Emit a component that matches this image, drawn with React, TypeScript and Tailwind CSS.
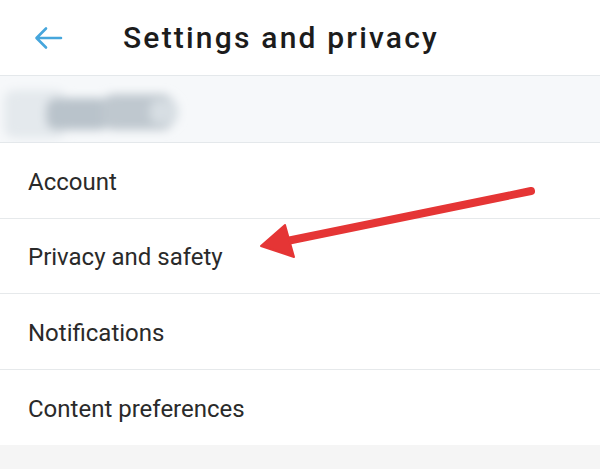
const rows = ['Account', 'Privacy and safety', 'Notifications', 'Content preferences'];

const BackArrow = () => (
  <svg width="32" height="28" viewBox="0 0 32 28" fill="none">
    <path
      d="M29 14H5M14 4.5L4.5 14L14 23.5"
      stroke="#46a6dc"
      strokeWidth="2.6"
      strokeLinecap="round"
      strokeLinejoin="round"
    />
  </svg>
);

// blurred-out account name
const Smudge = () => (
  <svg width="200" height="67" viewBox="0 0 200 67">
    <defs>
      <filter id="blur" x="-30%" y="-30%" width="160%" height="160%">
        <feGaussianBlur stdDeviation="5" />
      </filter>
    </defs>
    <g filter="url(#blur)">
      <rect x="4" y="14" width="62" height="48" rx="10" fill="#e4e9ed" />
      <rect x="46" y="22" width="64" height="32" rx="10" fill="#b9c3cb" />
      <rect x="102" y="18" width="72" height="36" rx="12" fill="#bfc8cf" />
      <rect x="150" y="24" width="28" height="24" rx="8" fill="#d7dee3" />
    </g>
  </svg>
);

const RedArrow = () => (
  <svg className="absolute left-0 top-0 pointer-events-none" width="600" height="469" viewBox="0 0 600 469">
    <path d="M531 191L287 241" stroke="#e53535" strokeWidth="8" strokeLinecap="round" />
    <path d="M261 246L285 225L294 257Z" fill="#e53535" stroke="#e53535" strokeWidth="2" strokeLinejoin="round" />
  </svg>
);

export default function App() {
  return (
    <div
      className="relative w-[600px] h-[469px] bg-[#f5f5f5] overflow-hidden"
      style={{ fontFamily: 'Roboto, "Noto Sans", sans-serif' }}
    >
      <div className="h-[76px] bg-white flex items-center border-b border-[#e4e8eb]">
        <div className="pl-[32px] w-[123px] flex items-center">
          <BackArrow />
        </div>
        <h1 className="text-[30px] font-medium text-[#1c1c1c] tracking-[2.2px]">Settings and privacy</h1>
      </div>
      <div className="h-[67px] bg-[#f6f8fa] border-b border-[#e4e8eb] flex items-center">
        <Smudge />
      </div>
      <div className="bg-white">
        {rows.map((r, i) => (
          <div
            key={r}
            className={`h-[75.5px] flex items-center pl-[28px] pt-[3px] ${i < rows.length - 1 ? 'border-b border-[#e6e9eb]' : ''}`}
          >
            <span className="text-[24px] text-[#2a2a2a]">{r}</span>
          </div>
        ))}
      </div>
      <RedArrow />
    </div>
  );
}
